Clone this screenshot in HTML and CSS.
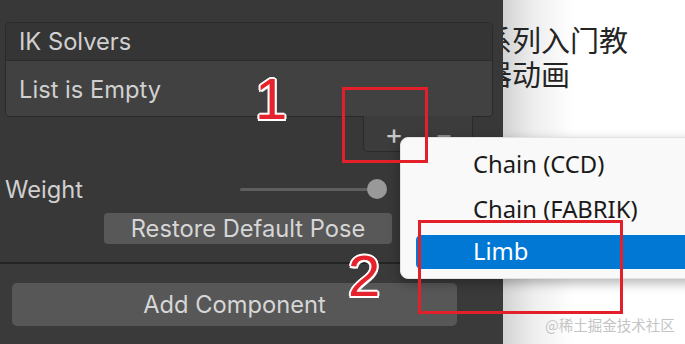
FILE: index.html
```html
<!DOCTYPE html>
<html>
<head>
<meta charset="utf-8">
<link rel="stylesheet" href="styles.css">
</head>
<body>
<div class="inspector">
  <div class="list-box">
    <div class="list-header">IK Solvers</div>
    <div class="list-body">List is Empty</div>
  </div>
  <div class="list-footer">
    <div class="footer-tab">
      <span class="btn-plus">+</span>
      <span class="btn-minus">−</span>
    </div>
  </div>
  <div class="weight-row">
    <div class="weight-label">Weight</div>
    <div class="slider">
      <div class="slider-track"></div>
      <div class="slider-knob"></div>
    </div>
    <div class="num-field"></div>
  </div>
  <div class="restore-btn">Restore Default Pose</div>
  <div class="separator"></div>
  <div class="lower">
    <div class="add-btn">Add Component</div>
  </div>
</div>
<div class="page">
  <div class="article">系列入门教<br>器动画</div>
</div>

<div class="popup">
  <div class="menu-item">Chain (CCD)</div>
  <div class="menu-item">Chain (FABRIK)</div>
  <div class="menu-item selected">Limb</div>
</div>

<div class="mark mark-1"></div>
<div class="mark mark-2"></div>
<div class="num num-1">1</div>
<div class="num num-2">2</div>
<div class="watermark">@稀土掘金技术社区</div>
</body>
</html>
```

FILE: styles.css
```css
html, body {
  margin: 0;
  padding: 0;
}
body {
  width: 685px;
  height: 344px;
  display: flex;
  overflow: hidden;
  position: relative;
  font-family: Inter, "Noto Sans", sans-serif;
}
.inspector {
  width: 503px;
  flex: none;
  background: #383838;
  display: flex;
  flex-direction: column;
  padding-top: 22px;
  box-sizing: border-box;
  color: #d0d0d0;
  font-size: 23.7px;
}
.list-box {
  margin: 0 10px 0 5px;
  border: 1px solid #2a2a2a;
  border-radius: 5px;
  overflow: hidden;
}
.list-header {
  height: 37px;
  line-height: 38px;
  padding-left: 13px;
  background: #353535;
  border-bottom: 1px solid #2c2c2c;
}
.list-body {
  height: 55px;
  line-height: 57px;
  padding-left: 13px;
  background: #414141;
}
.list-footer {
  display: flex;
  justify-content: flex-end;
  padding-right: 30px;
}
.footer-tab {
  width: 110px;
  height: 36px;
  margin-top: -1px;
  background: #3c3c3c;
  border: 1px solid #2a2a2a;
  border-top: none;
  border-radius: 0 0 5px 5px;
  display: flex;
  align-items: center;
  box-sizing: border-box;
  color: #c8c8c8;
}
.btn-plus {
  font-size: 28px;
  width: 30px;
  margin-left: 15px;
  text-align: center;
}
.btn-minus {
  font-size: 28px;
  width: 30px;
  margin-left: 20px;
  text-align: center;
  color: #8a8a8a;
}
.weight-row {
  margin-top: 23px;
  height: 28px;
  display: flex;
  align-items: center;
}
.weight-label {
  width: 235px;
  padding-left: 5px;
}
.slider {
  width: 148px;
  height: 28px;
  display: flex;
  align-items: center;
}
.slider-track {
  width: 128px;
  height: 3px;
  background: #5e5e5e;
  border-radius: 2px;
}
.slider-knob {
  width: 20px;
  height: 20px;
  border-radius: 50%;
  background: #999999;
  margin-left: -1px;
}
.num-field {
  margin-left: 14px;
  width: 90px;
  height: 28px;
  background: #2a2a2a;
  border-radius: 3px;
}
.restore-btn {
  margin: 10px 0 0 104px;
  width: 288px;
  height: 31px;
  line-height: 31px;
  background: #585858;
  border-radius: 4px;
  text-align: center;
  color: #d6d6d6;
}
.separator {
  margin-top: 18px;
  height: 2px;
  background: #232323;
}
.lower {
  flex: 1;
  background: #3a3a3a;
  padding-top: 19px;
}
.add-btn {
  margin-left: 12px;
  width: 445px;
  height: 43px;
  line-height: 43px;
  background: #575757;
  border-radius: 5px;
  text-align: center;
  color: #d6d6d6;
}
.page {
  flex: 1;
  background: linear-gradient(to right, #d2d2d2 0, #eeeeee 30px, #ffffff 70px);
  overflow: hidden;
}
.article {
  margin: 22px 0 0 -20px;
  font-family: "Noto Sans CJK SC", sans-serif;
  font-size: 29px;
  line-height: 34px;
  color: #242424;
  white-space: nowrap;
}
.popup {
  position: absolute;
  left: 400px;
  top: 137px;
  width: 300px;
  height: 142px;
  background: #f9f9f9;
  border: 1px solid #e2e2e2;
  border-radius: 8px;
  box-shadow: 0 4px 12px rgba(0, 0, 0, 0.3);
  box-sizing: border-box;
  padding-top: 5px;
  font-family: "Noto Sans", "Open Sans", sans-serif;
  font-size: 23.8px;
  color: #1a1a1a;
}
.menu-item {
  height: 45px;
  line-height: 42px;
  margin-left: 15px;
  padding-left: 57px;
  border-radius: 5px 0 0 5px;
}
.menu-item.selected {
  height: 34px;
  line-height: 33px;
  margin-top: 2px;
  background: #0078d4;
  color: #ffffff;
}
.mark {
  position: absolute;
  border: 3px solid #e3202a;
  box-sizing: border-box;
}
.mark-1 {
  left: 342px;
  top: 87px;
  width: 86px;
  height: 76px;
}
.mark-2 {
  left: 418px;
  top: 220px;
  width: 205px;
  height: 94px;
}
.num {
  position: absolute;
  font-family: "Liberation Sans", Arial, sans-serif;
  font-size: 58px;
  line-height: 58px;
  color: #e6222c;
  text-shadow: 2px 0 0 #fff, -2px 0 0 #fff, 0 2px 0 #fff, 0 -2px 0 #fff,
    1.5px 1.5px 0 #fff, -1.5px 1.5px 0 #fff, 1.5px -1.5px 0 #fff, -1.5px -1.5px 0 #fff;
}
.num-1 {
  left: 255px;
  top: 70px;
}
.num-2 {
  left: 348px;
  top: 247px;
}
.watermark {
  position: absolute;
  left: 545px;
  top: 314px;
  font-family: "Noto Sans CJK SC", sans-serif;
  font-size: 14.5px;
  color: #c4c4c4;
  white-space: nowrap;
}
```
